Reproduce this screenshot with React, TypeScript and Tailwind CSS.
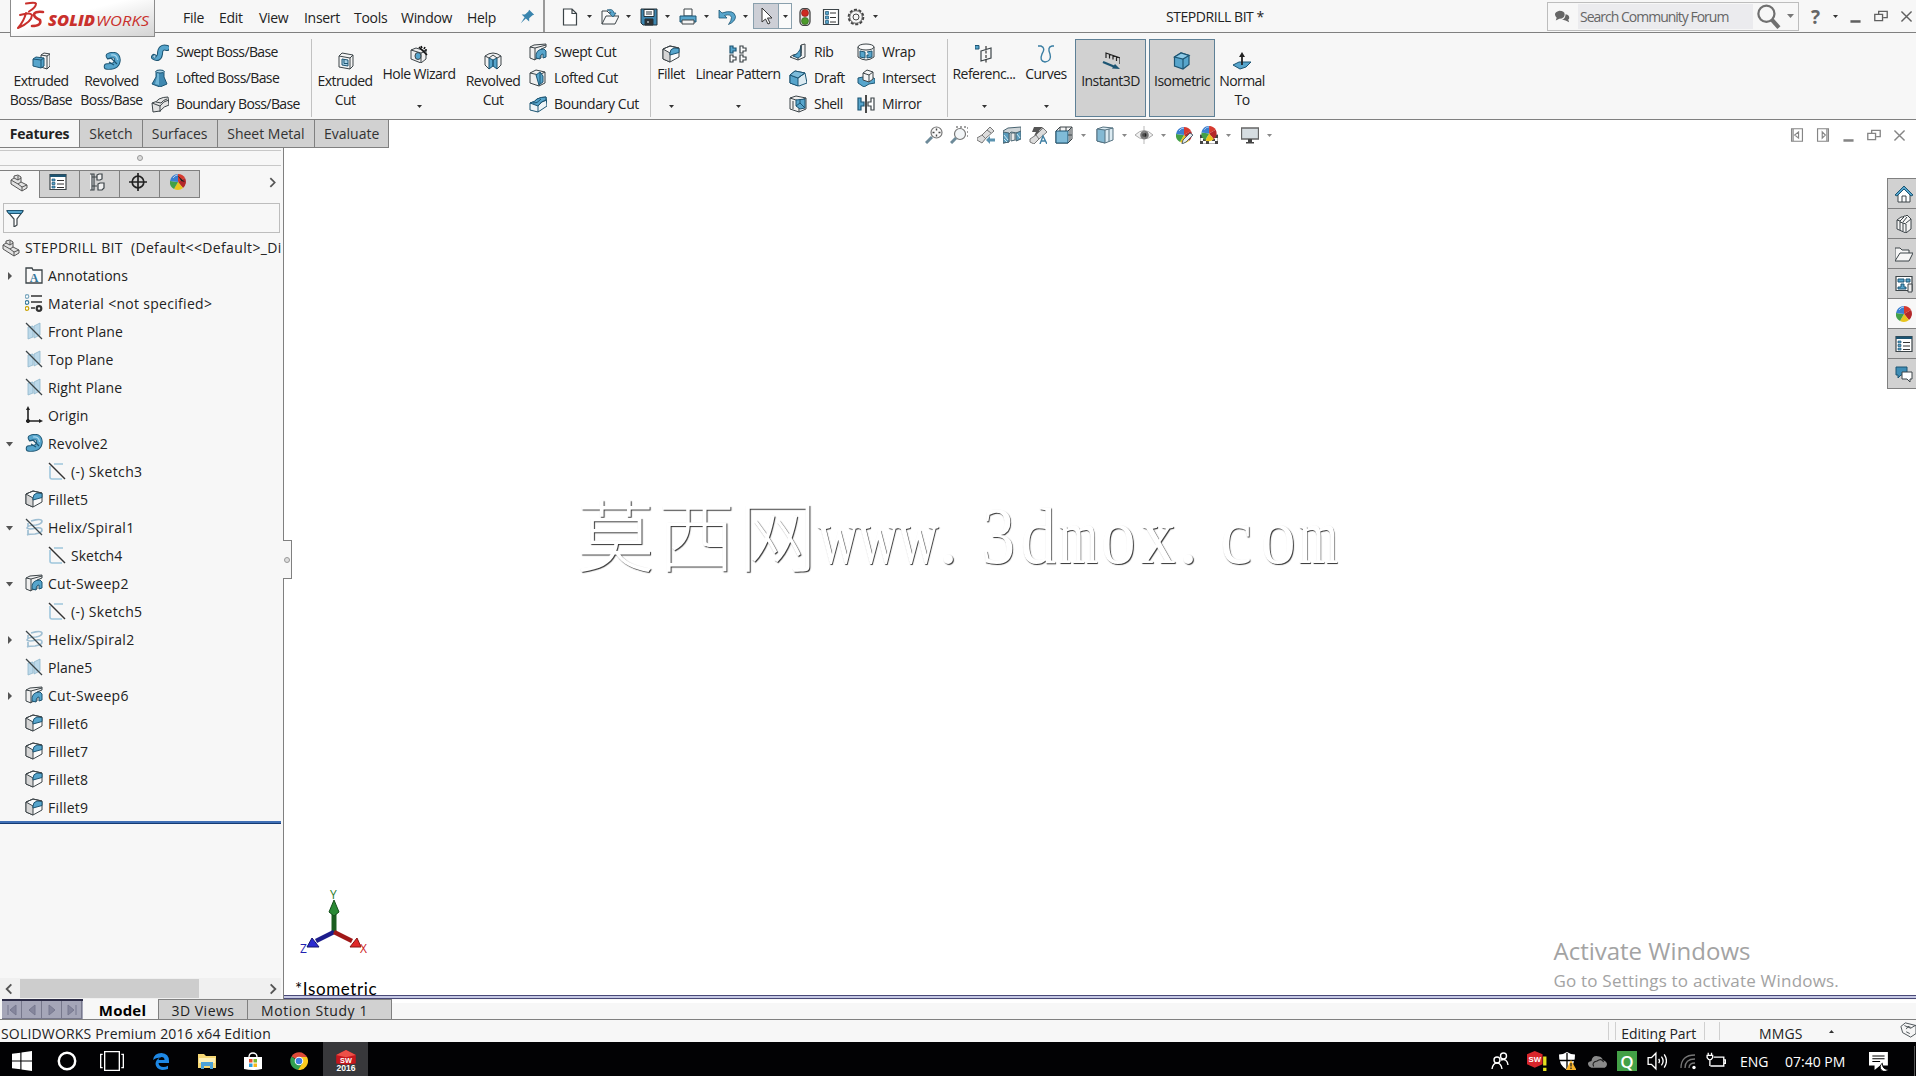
import type { ReactNode } from "react";

type IconProps = { name: string; size?: number; className?: string };

const BLUE = "#57a5cc";
const PALE = "#a9d3e8";
const INK = "#3c4448";
const NAVY = "#1d5573";

const ball = (
  <g>
    <path d="M9 9V1a8 8 0 0 1 7 4z" fill="#d63a2f" />
    <path d="M9 9l7-4a8 8 0 0 1-2 10z" fill="#b3282a" />
    <path d="M9 9l5 6a8 8 0 0 1-9 1z" fill="#e8c41c" />
    <path d="M9 9l-4 7a8 8 0 0 1-4-8z" fill="#43a047" />
    <path d="M9 9L1 8a8 8 0 0 1 8-7z" fill="#3a7fd0" />
    <path d="M4 5q2-3 5-3" stroke="#fff" strokeOpacity=".6" fill="none" />
  </g>
);

const ICONS: Record<string, ReactNode> = {
  extrude: (
    <g stroke={INK}>
      <path d="M9 3l3-2 6 1v12l-3 3-6-2z" fill="#f4f4f4" />
      <path d="M15 4v13M9 3l6 1 3-2" fill="none" />
      <path d="M1 7l3-2 8 1v8l-3 2-8-2z" fill={BLUE} stroke={NAVY} />
      <path d="M1 7l8 1 3-2M9 8v8" fill="none" stroke={NAVY} />
    </g>
  ),
  revolve: (
    <g fill="none">
      <path d="M6 4Q14 1 14.500 8 14 15 4 14.500" stroke={NAVY} strokeWidth="6.500" strokeLinecap="round" />
      <path d="M6 4Q14 1 14.500 8 14 15 4 14.500" stroke={BLUE} strokeWidth="4.700" strokeLinecap="round" />
      <path d="M4 7l4-1 6 6M6 10l5 3" stroke={NAVY} strokeWidth="1.200" />
      <path d="M8 3q6-1 6.500 5" stroke="#a9d8ee" strokeWidth="1.200" />
    </g>
  ),
  sweep: (
    <g fill="none" strokeLinecap="round">
      <path d="M3 14q5 3 6-3 0-8 7-6" stroke={NAVY} strokeWidth="6" />
      <path d="M3 14q5 3 6-3 0-8 7-6" stroke={BLUE} strokeWidth="4" />
      <circle cx="3.500" cy="13.500" r="1.700" fill={PALE} stroke={NAVY} strokeWidth=".7" />
    </g>
  ),
  loft: (
    <g stroke={NAVY}>
      <path d="M5 2v6L1 15l8 3 7-3-3-7V2z" fill="#3f88b0" />
      <path d="M6 8l-2 7 4 1V3H6z" fill="#70b5d6" stroke="none" />
      <ellipse cx="9" cy="2.500" rx="4" ry="1.500" fill={PALE} />
    </g>
  ),
  boundary: (
    <g stroke={INK} fill="#e3e3e3">
      <path d="M1 8q5-1 7-4 4-2 9-2l1 8q-5 1-9 6l-7 1z" />
      <path d="M1 8l8 3q3-5 9-6M9 11v6M5 7l5 1q2-3 6-4" fill="none" />
    </g>
  ),
  extrudeCut: (
    <g stroke={INK}>
      <path d="M3 4l3-3 11 2v11l-3 3-11-2z" fill="#f4f4f4" />
      <path d="M3 4l11 2v11M14 6l3-3" fill="none" />
      <path d="M6 7l6 1v6l-6-1z" fill={PALE} stroke={NAVY} />
      <path d="M8 7.500v4h4" fill="none" stroke={NAVY} />
    </g>
  ),
  holeWizard: (
    <g stroke={INK}>
      <path d="M1 5l5-2 10 3v8l-5 4-10-4z" fill="#eee" />
      <path d="M1 5l10 3 5-2M11 8v10" fill="none" />
      <ellipse cx="8" cy="11" rx="3" ry="3.500" fill={BLUE} />
      <path d="M9 2l8 8M11 1l1 2M15 2l-1 2M17 5l-2 0" stroke="#111" strokeWidth="1.600" />
    </g>
  ),
  revolveCut: (
    <g stroke={INK}>
      <path d="M1 4q8-6 16 0v9l-4 4-4-5-4 5-4-4z" fill="#f2f2f2" />
      <path d="M5 6l4 2v6l-4 3zM13 6l-4 2v6l4 3z" fill={BLUE} stroke={NAVY} />
      <path d="M1 4l4 2 4-3 4 3 4-2" fill="none" />
    </g>
  ),
  sweepCut: (
    <g stroke={INK}>
      <path d="M1 4l4-2 12-1v3l-5 2v9l-6 1v1l-5-2z" fill="#f0f0f0" />
      <path d="M1 4l5 1v12M6 5l11-3" fill="none" />
      <path d="M7 15q-1-9 8-9l2 2v6l-3 1v-4q-3 0-3 5z" fill={BLUE} stroke={NAVY} />
    </g>
  ),
  loftCut: (
    <g stroke={INK}>
      <path d="M1 4l6-3 9 2v11l-6 3-9-3z" fill="#f0f0f0" />
      <path d="M1 4l9 2v11M10 6l6-3" fill="none" />
      <path d="M7 6l4-3 3 4v6l-4 3z" fill={BLUE} stroke={NAVY} />
      <path d="M11 4v11" stroke={NAVY} />
    </g>
  ),
  boundaryCut: (
    <g stroke={NAVY}>
      <path d="M1 8q5-1 7-4 4-2 9-2l1 9-9 6-8-2z" fill="#eef4f7" />
      <path d="M1 8q5-1 7-4 4-2 9-2v3q-5 1-8 6z" fill={BLUE} />
      <path d="M9 11v6M9 11q3-5 9-6M4 8q4 1 8-4" fill="none" />
    </g>
  ),
  fillet: (
    <g stroke={INK}>
      <path d="M1 4l7-3 9 2v9l-9 5-7-3z" fill="#fbfbfb" />
      <path d="M1 4l7 4v9l-7-3z" fill="#d6d6d6" />
      <path d="M8 8q0-4 4-5l5 .5v4L8 10z" fill={BLUE} stroke={NAVY} />
      <path d="M1 4l7-3 9 2" fill="none" />
    </g>
  ),
  linear: (
    <g stroke={INK} strokeWidth="1.200">
      <path d="M1 1h3v2h3v3H4v2H1z" fill={BLUE} stroke={NAVY} />
      <path d="M11 1h3v2h3v3h-3v2h-3zM1 10h3v2h3v3H4v2H1zM11 10h3v2h3v3h-3v2h-3z" fill="#fff" />
    </g>
  ),
  rib: (
    <g stroke={INK}>
      <path d="M12 2l4-1v13l-7 3-8-3 3-2 8-2z" fill="#f0f0f0" />
      <path d="M12 3q-1 7-8 10l5 2 3-2z" fill={BLUE} stroke={NAVY} />
      <path d="M12 2v11M9 17v-2" fill="none" />
    </g>
  ),
  draft: (
    <g stroke={NAVY}>
      <path d="M1 6l5-4 10 2 2 10-8 3-9-3z" fill="#dcebf2" />
      <path d="M1 6l8 3v8l-8-3z" fill={BLUE} />
      <path d="M1 6l5-4 10 2-7 5z" fill="#7dbcdb" />
      <path d="M9 9l7-5" fill="none" />
    </g>
  ),
  shell: (
    <g stroke={INK}>
      <path d="M1 3l6-2 10 2v11l-7 3-9-3z" fill="#f0f0f0" />
      <path d="M1 3l9 3v11M10 6l7-3M4 6v8" fill="none" />
      <path d="M7 5l9-1v9l-5 1-4-3z" fill={BLUE} stroke={NAVY} />
      <path d="M7 11l4-3 5 5M11 4v4" fill="none" stroke={NAVY} />
    </g>
  ),
  wrap: (
    <g stroke={INK}>
      <path d="M1 4v10q8 6 16 0V4z" fill="#eee" />
      <ellipse cx="9" cy="4" rx="8" ry="3" fill="#fafafa" />
      <path d="M3 8l5 1v6l-5-1zM10 9l5-1v6l-5 1v-3h2" fill={BLUE} stroke={NAVY} />
    </g>
  ),
  intersect: (
    <g stroke={INK}>
      <path d="M1 9l5-1 9 0 3 2v4l-6 1-5 3-6-4z" fill={BLUE} stroke={NAVY} />
      <path d="M6 4l4-3 6 2v7l-4 3-6-2z" fill="#f4f4f4" />
      <path d="M6 4l6 2 4-3M12 6v7" fill="none" />
    </g>
  ),
  mirror: (
    <g stroke={INK} strokeWidth="1.200">
      <path d="M1 3h3v4h3v4H4v4H1z" fill={BLUE} stroke={NAVY} />
      <path d="M17 3h-3v4h-3v4h3v4h3z" fill="#fff" />
      <path d="M9 0v18" stroke="#111" strokeWidth="1.500" />
    </g>
  ),
  reference: (
    <g stroke={INK} fill="none">
      <path d="M0 .5h4v3.500H0z" fill={BLUE} stroke={NAVY} />
      <path d="M6 6l10-3v10L6 16z" strokeWidth="1.200" />
      <path d="M11 1v17" stroke="#111" strokeDasharray="3 1.500" />
    </g>
  ),
  curves: (
    <g fill="none" stroke="#3a7ea3" strokeWidth="1.400">
      <path d="M1 1h3q5 2 1 8-3 7 3 8 7-1 5-8-3-7 2-8h2" />
    </g>
  ),
  instant: (
    <g stroke="#222" fill="none">
      <path d="M4 6V1l14 5v6M7.500 2.500v4M11 3.500v4M14.500 5v4" strokeWidth="1.200" />
      <path d="M1 10l12 5" stroke={NAVY} strokeWidth="2.400" />
      <path d="M18 17l-8-.5 3-4.500z" fill={NAVY} stroke="none" />
    </g>
  ),
  isometric: (
    <g stroke={NAVY} strokeWidth="1.200">
      <path d="M1.500 5L8 1l8 2.500v9L10 17l-8.500-3z" fill={BLUE} />
      <path d="M1.500 5L8 1l8 2.500L10 7z" fill="#8cc9e6" />
      <path d="M10 7v10" />
    </g>
  ),
  normal: (
    <g>
      <path d="M0 13l6-3h12l-5 5-6 2z" fill={BLUE} stroke={NAVY} />
      <path d="M9 13V3" stroke="#222" strokeWidth="1.800" />
      <path d="M9 0l3 5H6z" fill="#222" />
    </g>
  ),
  pin: <path d="M11 1l6 6-2 .5-4 3.500 0 4-4-3.500L1 17l4.500-7L2 6.500h4l4-3.500z" fill="#3a85ae" />,
  newDoc: <path d="M2.500 1H11l4.500 4.500V17h-13zM11 1v4.500h4.500" fill="#fff" stroke={INK} strokeWidth="1.200" />,
  open: (
    <g stroke={INK}>
      <path d="M1 16V3h5l2 2h5v3M1 16L5 8h13l-4 8z" fill="#f8f8f8" />
      <path d="M6 2q6-2 7 3h2l-3 4-4-4h2q0-2-4-3z" fill={BLUE} stroke={NAVY} strokeWidth=".7" />
    </g>
  ),
  save: (
    <g stroke="#24323a">
      <path d="M1 1h16v16H3l-2-2z" fill="#3d86b0" />
      <path d="M4 1.500h10v7H4z" fill="#fff" />
      <path d="M6 4h6M6 6h6" />
      <path d="M5 11h8v6H5z" fill="#333" />
      <path d="M7 12.500h2v3H7z" fill="#fff" />
    </g>
  ),
  print: (
    <g stroke={INK}>
      <path d="M5 1h8v7H5z" fill="#fff" />
      <path d="M1 8h16v6H1z" fill={BLUE} stroke={NAVY} />
      <path d="M3 12h12v4H3z" fill="#f4f4f4" />
    </g>
  ),
  undo: <path d="M1 2v8h8L6.500 7.500q6-2 7 2 0 3-3 7 7-3 7-8Q16 1 4 5z" fill={BLUE} stroke={NAVY} strokeWidth=".8" />,
  cursor: <path d="M5 1v14l3.500-3 2.500 5 2-1-2.500-5H15z" fill="#fff" stroke="#333" />,
  traffic: (
    <g>
      <rect x="4" y="0.500" width="10" height="17" rx="4" fill="#e4e4e4" stroke="#444" strokeWidth="1.300" />
      <circle cx="9" cy="5" r="3.500" fill="#cf2a20" stroke="#7a1a14" strokeWidth=".6" />
      <circle cx="9" cy="13" r="3.500" fill="#4c9a2a" stroke="#2c5a18" strokeWidth=".6" />
    </g>
  ),
  list: (
    <g>
      <path d="M1.500 1.500h15v15h-15z" fill="#fff" stroke={INK} strokeWidth="1.200" />
      <path d="M3.500 3.500h3v3h-3zM3.500 8h3v3h-3zM3.500 12.500h3v3h-3z" fill={BLUE} stroke={NAVY} strokeWidth=".7" />
      <path d="M8 5h6M8 9.500h6M8 14h6" stroke="#333" />
    </g>
  ),
  gear: (
    <g fill="none" stroke="#444">
      <circle cx="9" cy="9" r="7.300" strokeWidth="2" strokeDasharray="3 1.590" />
      <circle cx="9" cy="9" r="6.300" fill="#f7f7f7" stroke="#555" />
      <circle cx="9" cy="9" r="3" />
    </g>
  ),
  chat: (
    <g fill="#666">
      <path d="M6 3q6 0 6 4 0 5-6 5l-4 2 1-3Q-2 5 6 3z" />
      <path d="M13 7q5 1 4 5l-1 1 1 3-4-2-4-1q4-1 4-6z" />
    </g>
  ),
  search: (
    <g fill="none" stroke="#707070">
      <circle cx="7.500" cy="7" r="5.800" strokeWidth="1.600" />
      <path d="M11.500 11.500l5 5.500" strokeWidth="3" />
    </g>
  ),
  part: (
    <g stroke="#555" fill="#e2e2e2">
      <path d="M1 6l3-2V2l4-1 3 2v5l6 3v3l-5 3-11-7z" />
      <path d="M1 6l7 4 3-2M4 4l4 2V2M8 6l3-2M12 17v-4l5-2M8 10l4 3" fill="none" />
    </g>
  ),
  props: (
    <g>
      <path d="M1 1.500h16v15H1z" fill="#fff" stroke={INK} strokeWidth="1.200" />
      <path d="M1 1.500h16v2.500H1z" fill={NAVY} />
      <path d="M3 6h3v2H3zM3 9.500h3v2H3zM3 13h3v2H3z" fill={BLUE} stroke={NAVY} strokeWidth=".7" />
      <path d="M8 7.500h7M8 11h7M8 14.500h7" stroke="#333" />
    </g>
  ),
  config: (
    <g stroke={INK} fill="#f0f0f0" strokeWidth="1.200">
      <path d="M3 1v16M1 1h4v16H1M3 4h5M3 13h5" />
      <path d="M8 2l2-1h3v5l-2 1H8zM9 11l2-1h4v5l-2 2H9z" />
    </g>
  ),
  target: (
    <g fill="none" stroke="#222" strokeWidth="1.700">
      <circle cx="9" cy="9" r="5.800" />
      <path d="M9 0v18M0 9h18" />
    </g>
  ),
  display: (
    <g>
      {ball}
      <path d="M8 2l8 7-4-1-1-2z" fill="#222" />
    </g>
  ),
  ball,
  filter: (
    <g stroke={INK}>
      <path d="M1 2h16l-6 8v6l-3 2v-8z" fill="#fff" strokeWidth="1.200" />
      <path d="M1 1.500h16l-1.500 3h-13z" fill={BLUE} stroke={NAVY} />
    </g>
  ),
  annotations: (
    <g>
      <path d="M1 2h6l1 2h9v13H1z" fill="#fafafa" stroke={INK} strokeWidth="1.300" />
      <text x="9" y="15.500" fontSize="12" fontWeight="700" textAnchor="middle" fill="#34769c" fontFamily="Liberation Serif, serif">A</text>
    </g>
  ),
  material: (
    <g>
      <g fill="#fff" strokeWidth="1.200">
        <circle cx="2" cy="2.500" r="1.800" stroke="#7aa7be" />
        <circle cx="2" cy="8.500" r="1.800" stroke="#35789c" />
        <circle cx="2" cy="14.500" r="1.800" stroke="#c9a200" />
      </g>
      <path d="M6 2h11M6 8h11M6 14h4" stroke="#333" strokeWidth="1.700" />
      <circle cx="14" cy="14.500" r="2.300" fill="none" stroke="#333" strokeWidth="2.200" />
    </g>
  ),
  plane: (
    <g>
      <path d="M3 5l5-1v11l-5 2zM9 4l6-3v12l-6 3z" fill="#bcd9ea" stroke="#8fb6cc" strokeWidth=".8" />
      <path d="M1 1l16 16" stroke={INK} strokeWidth="1.300" />
    </g>
  ),
  origin: (
    <g stroke="#222" fill="#222">
      <path d="M3 2v13h12" fill="none" strokeWidth="1.600" />
      <path d="M3 0l2 4H1zM18 15l-4 2v-4z" stroke="none" />
      <circle cx="3" cy="15" r="1.600" />
    </g>
  ),
  sketch: (
    <g fill="none">
      <path d="M6 2h9M2 4v11q0 2 2 2h10" stroke="#9fc6dc" strokeWidth="1.600" />
      <path d="M1 1l16 16" stroke="#333" strokeWidth="1.400" />
    </g>
  ),
  helix: (
    <g fill="none">
      <path d="M6 3q10-3 11 0 0 3-6 4-8 0-9 3 2 2 9 0 6-1 6 2 0 3-7 4-6 0-8 1M3 5v4M3 12v5" stroke="#9fbfd3" strokeWidth="1.700" />
      <path d="M1 1l16 16" stroke={INK} strokeWidth="1.300" />
    </g>
  ),
  zoomFit: (
    <g stroke="#777" fill="none">
      <circle cx="11.500" cy="6.500" r="5.500" fill="#fafafa" strokeWidth="1.200" />
      <path d="M11.500 2.500v2M11.500 8.500v2M7.500 6.500h2M13.500 6.500h2" stroke="#444" strokeWidth="1.400" />
      <path d="M7 11l-6 6" stroke="#6d8a99" strokeWidth="3" />
    </g>
  ),
  zoomArea: (
    <g stroke="#777" fill="none">
      <path d="M6 1h12v12" stroke="#444" strokeDasharray="2 2" />
      <circle cx="10" cy="8" r="5.500" fill="#f3f6f8" strokeWidth="1.200" />
      <path d="M6 12l-5 5" stroke="#6d8a99" strokeWidth="3" />
    </g>
  ),
  previous: (
    <g stroke="#777" fill="#dcdcdc">
      <path d="M0 12l5-3 8-8 4 4-8 7-4 5-5-3z" />
      <path d="M5 9l4 4M10 4l4 3" />
      <path d="M9 14l4-4v2.500h5v3h-5V18z" fill="#5b93b0" stroke="none" />
    </g>
  ),
  section: (
    <g stroke="#4a6471">
      <path d="M0 5l5-3 13-1v11l-4 2V7l-6-1-2 2v8l-6 1z" fill="#cfd5d8" />
      <path d="M0 6l6 1v9l-6 1zM13 7l5-2v8l-5 2z" fill="#5a9cbd" />
      <path d="M8 7h4v7l-4 1z" fill="#e8e8e8" />
      <path d="M1 9l4 5M1 13l3 3M14 8l3 4" stroke="#cfe8f2" />
    </g>
  ),
  dynamic: (
    <g stroke="#777">
      <path d="M5 1h9l-4 4h4l-9 5 2-4H3z" fill="#555" stroke="none" />
      <path d="M1 13l6-4 7-7 4 4-8 7-5 5-4-2z" fill="#dcdcdc" />
      <path d="M7 9l3 4" />
      <path d="M11 18l3-8 4 8M12 15h4" fill="none" stroke="#3f7fa3" strokeWidth="1.400" />
    </g>
  ),
  orientation: (
    <g stroke={INK} fill="none">
      <path d="M5 1h12v12l-4 4H1V5z" fill="#f3f3f3" />
      <path d="M1 5h12v12H1z" fill="#80bbd8" stroke={NAVY} />
      <path d="M13 5l4-4M11 1v4M13 9h4M15 3v12M5 1v4" />
    </g>
  ),
  style: (
    <g stroke="#547180">
      <path d="M1 3l6-2 10 1v12l-8 3-8-2z" fill="#dcebf2" />
      <path d="M1 3l8 1v13l-8-2z" fill="#84b9d3" />
      <path d="M9 4l8-2M13 3v12" fill="none" />
    </g>
  ),
  eye: (
    <g>
      <path d="M0 9q9-9 18 0-9 8-18 0z" fill="#f0f0f0" stroke="#aaa" />
      <circle cx="9.500" cy="9" r="4.300" fill="#777" />
      <circle cx="9.500" cy="9" r="2" fill="#222" />
      <path d="M9 0v18" stroke="#999" strokeWidth=".7" />
    </g>
  ),
  appearance: (
    <g>
      {ball}
      <path d="M8 14l7-7 3 2-7 7-4 2z" fill="#e6edf0" stroke="#456" strokeWidth=".9" />
    </g>
  ),
  scene: (
    <g>
      <path d="M0 9h18v9H0z" fill="#fff" stroke="#444" strokeWidth=".8" />
      <path d="M0 9h3v3H0zM15 9h3v3h-3zM3 13h3v2H3zM12 13h3v2h-3zM0 15h3v3H0zM6 15h3v3H6zM15 15h3v3h-3z" fill="#444" />
      <g transform="translate(.5 -1) scale(.95)">{ball}</g>
    </g>
  ),
  monitor: (
    <g>
      <path d="M.5 2h17v11H.5z" fill="#d6dde1" stroke="#666" strokeWidth="1.300" />
      <path d="M7 13h4v3H7zM5 16h8v1.500H5z" fill="#444" />
    </g>
  ),
  home: (
    <g stroke={INK}>
      <path d="M3 9v8h12V9L9 3z" fill="#fff" />
      <path d="M0 10l9-9 9 9-2 1-7-7-7 7z" fill={BLUE} stroke={NAVY} />
      <path d="M7 17v-6h4v6" fill="none" />
    </g>
  ),
  library: (
    <g stroke={INK} fill="#f5f5f5">
      <path d="M2 5l4-3h2l1-1h2l1-1 4 4v10l-5 4-9-4z" />
      <path d="M2 5l3 1v9M5 6l4-4M5 7l3 1v8M8 7l4-5M8 8l3 1v9M11 8l5-4" fill="none" />
    </g>
  ),
  folder: (
    <g stroke={INK} fill="#f6f6f6">
      <path d="M0 16V3h5l2 2h7v3" />
      <path d="M0 16L5 8h13l-4 8z" />
    </g>
  ),
  palette: (
    <g stroke={INK}>
      <path d="M1 1.500h16v14H1z" fill="#fff" strokeWidth="1.200" />
      <path d="M3 4h6v3H3zM11 4h4v3h-4zM6 9h3v3h2v2H3v-2h3z" fill={BLUE} stroke={NAVY} />
      <path d="M13 9h4v8h-4z" fill="#eee" />
    </g>
  ),
  forum: (
    <g>
      <path d="M1 2h11v8H6l-3 3v-3H1z" fill="#3f8db5" stroke={NAVY} />
      <path d="M7 7h10v7h-2v3l-3-3H7z" fill="#fff" stroke={INK} />
    </g>
  ),
  restore: <path d="M1 7h10v8H1zM6 6V3h11v8h-5" fill="none" stroke="currentColor" strokeWidth="1.700" />,
  close: <path d="M2 2l14 14M16 2L2 16" stroke="currentColor" strokeWidth="2" />,
  minimize: <path d="M2 14.500h14" stroke="currentColor" strokeWidth="3.500" />,
  paneLeft: <path d="M2 1h14v16H2zM4 1v16M11 5v8L6 9z" fill="none" stroke="currentColor" strokeWidth="1.500" />,
  paneRight: <path d="M2 1h14v16H2zM14 1v16M8 5v8l4-4z" fill="none" stroke="currentColor" strokeWidth="1.500" />,
  chevLeft: <path d="M12 3L6 9l6 6" fill="none" stroke="#555" strokeWidth="2.400" />,
  chevRight: <path d="M6 3l6 6-6 6" fill="none" stroke="#555" strokeWidth="2.400" />,
  tag: (
    <g stroke={INK} fill="#f5f5f5">
      <path d="M1 5l5-4 12 3v9l-6 4L3 12z" />
      <path d="M5 4l7 3 5-3M7 8l2-3 3 1M7 11l4 2" fill="none" />
    </g>
  ),
  // taskbar
  windows: <path d="M0 2.500l7.500-1v7H0zM8.500 1.300L18 0v8.500H8.500zM0 9.500h7.500v7l-7.500-1zM8.500 9.500H18V18l-9.500-1.300z" fill="#fff" />,
  cortana: <circle cx="9" cy="9" r="7.400" fill="none" stroke="#fff" strokeWidth="2.200" />,
  taskview: <path d="M3.500 2h11v14h-11zM2 4H.5v10H2M16 4h1.500v10H16" fill="none" stroke="#fff" strokeWidth="1" />,
  edge: <path d="M1 8Q2 1 9.500 1 17 1.500 17 9v2H6.500q.5 4 5 4 2.500 0 4.500-1.300V17q-3 1-6 1-6-1-6.500-6Q3.600 7.500 8 5.500 3.500 5.500 1 8zM6.500 8h6q0-3-3-3-2.600.3-3 3z" fill="#1e88e5" />,
  explorer: (
    <g>
      <path d="M0 2h6l2 2h10v12H0z" fill="#f6d774" />
      <path d="M1 6h16v5H1z" fill="#fdf0b8" />
      <path d="M3 10h12v7h-3v-3H6v3H3z" fill="#4da3d8" />
    </g>
  ),
  store: (
    <g>
      <path d="M0 5h18v12q-9 2-18 0z" fill="#fff" />
      <path d="M5 5q0-4 4-4t4 4" fill="none" stroke="#fff" strokeWidth="1.300" />
      <path d="M5 7h3.500v3.500H5z" fill="#e8502f" />
      <path d="M9.500 7H13v3.500H9.500z" fill="#7cb82f" />
      <path d="M5 11.500h3.500V15H5z" fill="#2b9fe0" />
      <path d="M9.500 11.500H13V15H9.500z" fill="#f6b81a" />
    </g>
  ),
  chrome: (
    <g>
      <path d="M9 9L1.500 4.500A9 9 0 0 1 17 5z" fill="#dd4b39" />
      <path d="M9 9h-1L1.500 4.500A9 9 0 0 0 8 18l5-7z" fill="#33a152" />
      <path d="M9 5h8a9 9 0 0 1-9 13l4.500-7z" fill="#fbcb1e" />
      <circle cx="9" cy="9" r="4.300" fill="#fff" />
      <circle cx="9" cy="9" r="3.300" fill="#3f7fe0" />
    </g>
  ),
  sw: (
    <g>
      <path d="M1 4l8-4 8 4v7l-8 1-8-1z" fill="#c4161c" />
      <path d="M1 4l8-4 8 4-8 2z" fill="#ec5048" />
      <text x="9" y="10.500" fontSize="6" fontWeight="700" textAnchor="middle" fill="#fff" fontFamily="Liberation Sans, sans-serif">SW</text>
      <text x="9" y="16.800" fontSize="7" fontWeight="700" textAnchor="middle" fill="#fff" fontFamily="Liberation Sans, sans-serif">2016</text>
    </g>
  ),
  people: (
    <g fill="none" stroke="#fff" strokeWidth="1.400">
      <circle cx="6" cy="8" r="3" />
      <path d="M1 17q1-6 5-6t5 6" />
      <circle cx="12.500" cy="4" r="3" />
      <path d="M10 8q6-2 7 5" />
    </g>
  ),
  swAlert: (
    <g>
      <path d="M0 3l7-3 7 3v9l-7 3-7-3z" fill="#d9262b" />
      <text x="7" y="10" fontSize="7" fontWeight="700" textAnchor="middle" fill="#fff" fontFamily="Liberation Sans, sans-serif">SW</text>
      <path d="M14.500 5h3v8h-3zM14.500 15h3v3h-3z" fill="#e6e21e" />
    </g>
  ),
  shield: (
    <g>
      <path d="M9 0q4 2.500 8 2.500Q17.500 13 9 18 .5 13 1 2.500 5 2.500 9 0z" fill="#fff" />
      <path d="M9 1v16M1 8.500h16" stroke="#000" strokeWidth="1.300" />
      <path d="M13 8l5.500 10H8z" fill="#f7b32b" />
      <path d="M13 11v3.500M13 15.500v1.500" stroke="#222" strokeWidth="1.300" />
    </g>
  ),
  cloud: (
    <g>
      <path d="M2 14q-3-4 2-5 1-6 7-4 3 1 3 3 4 1 4 4 0 2-2 3H4z" fill="#8a8a8a" />
      <path d="M6 14q-2-4 3-5 4-3 6 1" fill="none" stroke="#222" />
    </g>
  ),
  speaker: (
    <g fill="none" stroke="#fff" strokeWidth="1.200">
      <path d="M1 6h3l4-4v14l-4-4H1zM10.500 7q1.500 2 0 4M13 5q3 4 0 8M15.500 3q4 6 0 12" />
    </g>
  ),
  wifi: (
    <g fill="none" stroke="#777" strokeWidth="1.300">
      <path d="M2 16Q2 3 16 3M6 16q0-9 10-9M10 16q0-5 6-5" />
      <circle cx="15" cy="15.500" r="1.700" fill="#fff" stroke="none" />
    </g>
  ),
  battery: (
    <g fill="none" stroke="#fff" strokeWidth="1.200">
      <path d="M7 5.500h9v8H4M16 8h1.500v3H16" />
      <path d="M1 4h5v2q-2.500 4-5 0zM2 4V1.500M5 4V1.500M3.500 8v5.500" />
    </g>
  ),
  notify: (
    <g>
      <path d="M0 1h17v12H10l-5 4v-4H0z" fill="#fff" />
      <path d="M3 4.500h11M3 7h11M3 9.500h7" stroke="#000" />
      <path d="M12 11a4 4 0 1 0 5.500 5.500Q12 17 12 11z" fill="#fff" stroke="#000" strokeWidth=".8" />
    </g>
  ),
};

function Icon({ name, size = 18, className = "" }: IconProps) {
  return (
    <svg width={size} height={size} viewBox="0 0 18 18" className={`shrink-0 ${className}`}>
      {ICONS[name]}
    </svg>
  );
}

function Caret({ className = "text-[#333]" }: { className?: string }) {
  return (
    <svg width="5" height="3" viewBox="0 0 5 3" className={`shrink-0 ${className}`}>
      <path d="M0 0h5L2.500 3z" fill="currentColor" />
    </svg>
  );
}

const MENU = [
  { label: "File", cls: "w-[36px]" },
  { label: "Edit", cls: "w-[40px]" },
  { label: "View", cls: "w-[45px]" },
  { label: "Insert", cls: "w-[50px]" },
  { label: "Tools", cls: "w-[47px]" },
  { label: "Window", cls: "w-[66px]" },
  { label: "Help", cls: "w-[54px]" },
];

function Logo() {
  return (
    <div className="relative z-10 ml-[10px] h-[37px] w-[145px] shrink-0 self-start border border-t-0 border-[#8c8c8c] bg-linear-to-br from-white from-40% to-[#d4d4d4]">
      <svg width="143" height="36" viewBox="0 0 143 36">
        <g fill="none" stroke="#c9302c" strokeWidth="2" strokeLinecap="round" strokeLinejoin="round">
          <path d="M15 3.500q9-1.500 10 0 0 4-7 8" />
          <path d="M9 15q10-3 12 0 0 7-14 13 6-7 8-15" />
          <path d="M32 12q-9-1-9 3 1 3 6 5 2 6-8 6" strokeWidth="2.600" />
        </g>
        <text x="37" y="26" fontSize="15" fontWeight="800" fontStyle="italic" fill="#c9302c" textLength="47" lengthAdjust="spacingAndGlyphs" fontFamily="Open Sans, sans-serif">SOLID</text>
        <text x="85" y="26" fontSize="15" fontStyle="italic" fill="#c9302c" textLength="53" lengthAdjust="spacingAndGlyphs" fontFamily="Open Sans, sans-serif">WORKS</text>
      </svg>
    </div>
  );
}

function QuickItem({ icon, cls }: { icon: string; cls: string }) {
  return (
    <div className={`flex items-center justify-between ${cls}`}>
      <Icon name={icon} />
      <Caret />
    </div>
  );
}

function TitleBar() {
  return (
    <div className="flex h-[33px] shrink-0 items-center border-b border-[#808080] bg-[#f7f7f7]">
      <Logo />
      <div className="ml-[28px] flex pt-[3px] tracking-[-0.3px]">
        {MENU.map((m) => (
          <span key={m.label} className={m.cls}>{m.label}</span>
        ))}
      </div>
      <Icon name="pin" size={15} className="mt-px -ml-px" />
      <div className="ml-[8px] h-full w-[2px] bg-[#9a9a9a]" />
      <div className="ml-[16px] flex items-center gap-[9px] pt-px">
        <QuickItem icon="newDoc" cls="w-[31px]" />
        <QuickItem icon="open" cls="w-[30px]" />
        <QuickItem icon="save" cls="w-[30px]" />
        <QuickItem icon="print" cls="w-[30px]" />
        <QuickItem icon="undo" cls="w-[30px]" />
      </div>
      <div className="ml-[5px] flex h-[26px] w-[39px] border border-[#8aa0ad] bg-[#fafafa]">
        <div className="flex w-[25px] items-center justify-center border-r border-[#8aa0ad] bg-[#cdcfd6]">
          <Icon name="cursor" />
        </div>
        <div className="flex flex-1 items-center justify-center"><Caret /></div>
      </div>
      <Icon name="traffic" className="mt-px ml-[4px]" />
      <Icon name="list" className="mt-px ml-[8px]" />
      <Icon name="gear" className="mt-px ml-[7px]" />
      <Caret className="ml-[8px] text-[#333]" />
      <span className="ml-[288px] w-[381px] pt-[2px] tracking-[-0.45px]">STEPDRILL BIT *</span>
      <div className="flex h-[29px] w-[252px] items-center border border-[#bdbdbd] bg-[#f7f7f7] pl-[6px]">
        <Icon name="chat" size={16} />
        <div className="ml-[8px] flex h-[25px] w-[175px] items-center bg-[#ebebee] pt-[2px] pl-[2px] tracking-[-1px] whitespace-nowrap text-[#666]">Search Community Forum</div>
        <Icon name="search" size={25} className="ml-[3px]" />
        <svg width="7" height="4" viewBox="0 0 7 4" className="ml-[6px]"><path d="M0 0h7L3.500 4z" fill="#777" /></svg>
      </div>
      <span className="ml-[12px] w-[22px] pt-px text-[19px] font-bold text-[#666]">?</span>
      <Caret />
      <div className="ml-[11px] flex items-center gap-[12px] text-[#606060]">
        <Icon name="minimize" size={13} className="mt-[3px]" />
        <Icon name="restore" size={14} />
        <Icon name="close" size={13} />
      </div>
    </div>
  );
}

type BigProps = { icon: string; lines: string[]; cls: string; drop?: boolean; active?: boolean };

function BigButton({ icon, lines, cls, drop, active }: BigProps) {
  return (
    <div
      className={`flex h-[78px] shrink-0 flex-col items-center whitespace-nowrap ${cls} ${
        active ? "border border-[#5e8096] bg-[#d1d1d1] pt-[12px]" : drop ? "pt-[6px]" : "pt-[13px]"
      }`}
    >
      <Icon name={icon} />
      {lines.map((l) => (
        <span key={l} className="mt-[2px] leading-[17px] tracking-[-0.55px]">{l}</span>
      ))}
      {drop && <Caret className="mt-[23px] text-[#333]" />}
    </div>
  );
}

type StackProps = { items: [string, string][]; cls: string };

function SmallStack({ items, cls }: StackProps) {
  return (
    <div className={`flex h-[78px] shrink-0 flex-col ${cls}`}>
      {items.map(([icon, label]) => (
        <div key={label} className="flex h-[26px] items-center gap-[7px] whitespace-nowrap">
          <Icon name={icon} />
          <span>{label}</span>
        </div>
      ))}
    </div>
  );
}

function Divider() {
  return <div className="h-[78px] w-px shrink-0 bg-[#c2c2c2]" />;
}

function Ribbon() {
  return (
    <div className="flex h-[87px] shrink-0 border-b border-[#808080] bg-[#f7f7f7] pt-[6px]">
      <BigButton icon="extrude" lines={["Extruded", "Boss/Base"]} cls="ml-[6px] w-[70px]" />
      <BigButton icon="revolve" lines={["Revolved", "Boss/Base"]} cls="w-[71px]" />
      <SmallStack items={[["sweep", "Swept Boss/Base"], ["loft", "Lofted Boss/Base"], ["boundary", "Boundary Boss/Base"]]} cls="ml-[4px] w-[160px] tracking-[-0.6px]" />
      <Divider />
      <BigButton icon="extrudeCut" lines={["Extruded", "Cut"]} cls="w-[66px]" />
      <BigButton icon="holeWizard" lines={["Hole Wizard"]} cls="w-[82px]" drop />
      <BigButton icon="revolveCut" lines={["Revolved", "Cut"]} cls="w-[66px]" />
      <SmallStack items={[["sweepCut", "Swept Cut"], ["loftCut", "Lofted Cut"], ["boundaryCut", "Boundary Cut"]]} cls="ml-[3px] w-[121px] tracking-[-0.4px]" />
      <Divider />
      <BigButton icon="fillet" lines={["Fillet"]} cls="w-[40px]" drop />
      <BigButton icon="linear" lines={["Linear Pattern"]} cls="w-[94px]" drop />
      <SmallStack items={[["rib", "Rib"], ["draft", "Draft"], ["shell", "Shell"]]} cls="ml-[4px] w-[68px] tracking-[-0.5px]" />
      <SmallStack items={[["wrap", "Wrap"], ["intersect", "Intersect"], ["mirror", "Mirror"]]} cls="w-[90px] tracking-[-0.4px]" />
      <Divider />
      <BigButton icon="reference" lines={["Referenc..."]} cls="w-[72px]" drop />
      <BigButton icon="curves" lines={["Curves"]} cls="w-[52px]" drop />
      <BigButton icon="instant" lines={["Instant3D"]} cls="ml-[3px] w-[71px]" active />
      <BigButton icon="isometric" lines={["Isometric"]} cls="ml-[3px] w-[66px]" active />
      <BigButton icon="normal" lines={["Normal", "To"]} cls="w-[54px]" />
    </div>
  );
}

const TREE: { icon: string; label: string; cls?: string; child?: boolean; open?: boolean; closed?: boolean }[] = [
  { icon: "annotations", label: "Annotations", closed: true, cls: "tracking-[0.05px]" },
  { icon: "material", label: "Material <not specified>", cls: "tracking-[0.3px]" },
  { icon: "plane", label: "Front Plane" },
  { icon: "plane", label: "Top Plane", cls: "tracking-[0.1px]" },
  { icon: "plane", label: "Right Plane", cls: "tracking-[0.1px]" },
  { icon: "origin", label: "Origin", cls: "tracking-[0.1px]" },
  { icon: "revolve", label: "Revolve2", open: true, cls: "tracking-[0.2px]" },
  { icon: "sketch", label: "(-) Sketch3", child: true, cls: "tracking-[0.35px]" },
  { icon: "fillet", label: "Fillet5", cls: "tracking-[0.2px]" },
  { icon: "helix", label: "Helix/Spiral1", open: true, cls: "tracking-[0.3px]" },
  { icon: "sketch", label: "Sketch4", child: true },
  { icon: "sweepCut", label: "Cut-Sweep2", open: true, cls: "tracking-[0.3px]" },
  { icon: "sketch", label: "(-) Sketch5", child: true, cls: "tracking-[0.35px]" },
  { icon: "helix", label: "Helix/Spiral2", closed: true, cls: "tracking-[0.3px]" },
  { icon: "plane", label: "Plane5" },
  { icon: "sweepCut", label: "Cut-Sweep6", closed: true, cls: "tracking-[0.3px]" },
  { icon: "fillet", label: "Fillet6", cls: "tracking-[0.2px]" },
  { icon: "fillet", label: "Fillet7", cls: "tracking-[0.2px]" },
  { icon: "fillet", label: "Fillet8", cls: "tracking-[0.2px]" },
  { icon: "fillet", label: "Fillet9", cls: "tracking-[0.2px]" },
];

function FeatureTree() {
  return (
    <div className="flex w-[284px] shrink-0 flex-col border-r border-[#808080] bg-[#f7f7f7]">
      <div className="mt-[2px] flex h-[16px] w-[281px] items-center justify-center border-y border-[#c8c8c8] pr-px">
        <div className="h-[6px] w-[6px] rounded-full border border-[#999] bg-[#ddd]" />
      </div>
      <div className="mt-[4px] flex h-[28px] w-[281px] items-center">
        <div className="flex h-full w-[40px] items-center justify-center border-t border-r border-[#808080] pr-[2px] pb-[4px]"><Icon name="part" /></div>
        {["props", "config", "target", "display"].map((n) => (
          <div key={n} className="flex h-full w-[40px] items-center justify-center border border-l-0 border-[#808080] bg-[#d1d1d1] pr-[3px] pb-[4px]">
            <Icon name={n} />
          </div>
        ))}
        <Icon name="chevRight" size={13} className="mb-[4px] ml-[66px]" />
      </div>
      <div className="mt-[5px] ml-[3px] flex h-[30px] w-[277px] items-center border border-[#bdbdbd] pl-[2px]">
        <Icon name="filter" />
      </div>
      <div className="mt-px flex h-[28px] w-[281px] items-center gap-[5px] overflow-hidden pl-[2px] whitespace-pre">
        <Icon name="part" />
        <span className="tracking-[0.36px]">{"STEPDRILL BIT  (Default<<Default>_Di"}</span>
      </div>
      {TREE.map((t) => (
        <div key={t.label} className="flex h-[28px] items-center whitespace-nowrap">
          <div className="flex w-[25px] pl-[6px]">
            {t.open && <svg width="7" height="5" viewBox="0 0 7 5"><path d="M0 0h7L3.500 4.500z" fill="#555" /></svg>}
            {t.closed && <svg width="5" height="8" viewBox="0 0 5 8" className="ml-[2px]"><path d="M0 0v8l4-4z" fill="#555" /></svg>}
          </div>
          <Icon name={t.icon} className={t.child ? "mb-[2px] ml-[23px]" : "mb-[2px]"} />
          <span className={`ml-[5px] ${t.cls ?? ""}`}>{t.label}</span>
        </div>
      ))}
      <div className="-mt-px h-[3px] w-[281px] border-b border-[#143a73] bg-[#3f6fb5]" />
      <div className="mt-auto flex h-[21px] w-[281px] items-center bg-[#f0f0f0]">
        <Icon name="chevLeft" size={14} className="mr-[4px] ml-[2px]" />
        <div className="h-[19px] w-[179px] bg-[#cdcdcd]" />
        <Icon name="chevRight" size={14} className="ml-[67px]" />
      </div>
    </div>
  );
}

const HEADS_UP: { icon: string; cls: string; drop?: boolean }[] = [
  { icon: "zoomFit", cls: "w-[25px]" },
  { icon: "zoomArea", cls: "w-[27px]" },
  { icon: "previous", cls: "w-[26px]" },
  { icon: "section", cls: "w-[26px]" },
  { icon: "dynamic", cls: "w-[26px]" },
  { icon: "orientation", cls: "w-[41px]", drop: true },
  { icon: "style", cls: "w-[39px]", drop: true },
  { icon: "eye", cls: "w-[40px]", drop: true },
  { icon: "appearance", cls: "w-[25px]" },
  { icon: "scene", cls: "w-[41px]", drop: true },
  { icon: "monitor", cls: "w-[40px]", drop: true },
];

const COMMAND_TABS = [
  { label: "Sketch", cls: "w-[63px]" },
  { label: "Surfaces", cls: "w-[75px]" },
  { label: "Sheet Metal", cls: "w-[98px]" },
  { label: "Evaluate", cls: "w-[74px]" },
];

function TabRow() {
  return (
    <div className="flex h-[28px] shrink-0 items-center">
      <div className="flex h-full w-[79px] items-center justify-center border-b border-[#808080] bg-[#f7f7f7] pt-px font-bold tracking-[-0.2px]">Features</div>
      <div className="flex h-full w-[310px] border-l border-[#808080]">
        {COMMAND_TABS.map((t) => (
          <div key={t.label} className={`flex h-full items-center justify-center border-r border-b border-[#808080] bg-[#d1d1d1] pt-px text-[#333] ${t.cls}`}>{t.label}</div>
        ))}
      </div>
      <div className="ml-[536px] flex w-[865px] pt-[2px]">
        {HEADS_UP.map((h) => (
          <div key={h.icon} className={`flex items-center ${h.cls}`}>
            <Icon name={h.icon} />
            {h.drop && <Caret className="ml-[8px] text-[#888]" />}
          </div>
        ))}
      </div>
      <div className="flex items-center gap-[12px] pt-[2px] text-[#858585]">
        <Icon name="paneLeft" size={14} />
        <Icon name="paneRight" size={14} />
        <Icon name="minimize" size={13} className="mt-[2px]" />
        <Icon name="restore" size={14} />
        <Icon name="close" size={13} />
      </div>
    </div>
  );
}

const WATERMARK: { ch: string; cls: string }[] = [
  { ch: "w", cls: "scale-x-[0.7]" },
  { ch: "w", cls: "scale-x-[0.7]" },
  { ch: "w", cls: "scale-x-[0.7]" },
  { ch: ".", cls: "-translate-x-[10px]" },
  { ch: "3", cls: "scale-x-[0.82]" },
  { ch: "d", cls: "scale-x-[0.88]" },
  { ch: "m", cls: "scale-x-[0.62]" },
  { ch: "o", cls: "scale-x-[0.86]" },
  { ch: "x", cls: "scale-x-[0.86]" },
  { ch: ".", cls: "-translate-x-[10px]" },
  { ch: "c", cls: "-translate-x-[2px] scale-x-[0.88]" },
  { ch: "o", cls: "scale-x-[0.86]" },
  { ch: "m", cls: "scale-x-[0.62]" },
];

function Watermark() {
  return (
    <div className="absolute top-[343px] left-[291px] flex h-[90px] items-center leading-none text-white [text-shadow:1px_1px_1px_#333]">
      {["莫", "西", "网"].map((c) => (
        <span key={c} className="w-[81px] pb-[8px] text-center font-['Noto_Sans_CJK_SC',sans-serif] text-[78px] font-light">{c}</span>
      ))}
      {WATERMARK.map((w, i) => (
        <span key={i} className="flex w-[40px] justify-center font-['Liberation_Serif',serif] text-[81px]">
          <span className={w.cls}>{w.ch}</span>
        </span>
      ))}
    </div>
  );
}

function Triad() {
  return (
    <svg width="76" height="80" viewBox="0 -8 76 80" className="absolute bottom-[35px] left-[14px]">
      <path d="M36 44V20" stroke="#1b5e20" strokeWidth="5" />
      <path d="M36 12l5 12-5 4-5-4z" fill="#2a8a35" stroke="#14501a" />
      <path d="M36 44L18 53" stroke="#1c1c8c" strokeWidth="4.500" />
      <path d="M9 59l5-9 7 9z" fill="#2a2ad0" stroke="#14146e" />
      <path d="M36 44l18 9" stroke="#a01818" strokeWidth="4.500" />
      <path d="M63 59l-11 0 7-9z" fill="#e02a2a" stroke="#8a1414" />
      <g fontSize="12" fontFamily="Open Sans, sans-serif">
        <text x="32" y="11" fill="#2a7a2a">Y</text>
        <text x="2" y="65" fill="#2222b0">Z</text>
        <text x="62" y="65" fill="#cc2222">X</text>
      </g>
    </svg>
  );
}

function Viewport() {
  return (
    <div className="relative flex flex-1 justify-end border-b border-[#4a4a78] bg-white">
      <div className="absolute top-[392px] -left-px flex h-[39px] w-[9px] items-center justify-center border border-l-0 border-[#808080] bg-[#f7f7f7]">
        <div className="h-[6px] w-[6px] rounded-full border border-[#999] bg-[#ddd]" />
      </div>
      <Watermark />
      <Triad />
      <div className="absolute bottom-[-4px] left-[11px] font-['Lato',sans-serif] text-[17px] leading-[20px] tracking-[0.6px] text-black">*Isometric</div>
      <div className="absolute right-[77px] -bottom-px text-[#a3a3a3]">
        <div className="text-[24px] leading-[30px]">Activate Windows</div>
        <div className="text-[17px] leading-[30px] tracking-[0.2px] whitespace-nowrap">Go to Settings to activate Windows.</div>
      </div>
      <div className="mt-[30px] flex h-[211px] w-[29px] flex-col border-t border-l border-[#808080]">
        {["home", "library", "folder", "palette", "ball", "props", "forum"].map((n) => (
          <div key={n} className={`flex h-[30px] items-center justify-center border-b border-[#808080] pl-[4px] ${n === "ball" ? "bg-[#f7f7f7]" : "bg-[#d1d1d1]"}`}>
            <Icon name={n} />
          </div>
        ))}
      </div>
    </div>
  );
}

function BottomTabs() {
  return (
    <div className="flex h-[21px] shrink-0 border-b border-[#808080] bg-[#f7f7f7]">
      <div className="ml-[2px] flex w-[81px] border-t-2 border-[#2b2b45] bg-[#a5a6b8]">
        {["M4 3v10M12 3v10L6 8z", "M11 3v10L5 8z", "M5 3v10l6-5z", "M12 3v10M4 3v10l6-5z"].map((d) => (
          <div key={d} className="flex w-[20px] items-center justify-center border-r border-b border-[#77788c]">
            <svg width="16" height="16" viewBox="0 0 16 16"><path d={d} fill="#85869c" stroke="#77788f" /></svg>
          </div>
        ))}
      </div>
      <div className="flex w-[75px] items-center justify-center pt-[2px] pl-[4px] text-[15px] font-bold tracking-[0.2px] text-black">Model</div>
      <div className="flex w-[90px] items-center justify-center border-x border-t border-[#808080] bg-[#d1d1d1] pt-[2px] tracking-[0.5px]">3D Views</div>
      <div className="flex w-[144px] items-center border-t border-r border-[#808080] bg-[#d1d1d1] pt-[2px] pl-[13px] tracking-[0.6px]">Motion Study 1</div>
      <div className="mt-px h-[3px] flex-1 bg-white" />
    </div>
  );
}

function StatusBar() {
  return (
    <div className="flex h-[22px] shrink-0 items-center bg-[#f7f7f7]">
      <span className="w-[1609px] pt-[5px] pl-[1px] tracking-[0.17px]">SOLIDWORKS Premium 2016 x64 Edition</span>
      <div className="h-[18px] w-[8px] border-x border-[#d0d0d0]" />
      <div className="flex h-[18px] w-[89px] items-center border-r border-[#d0d0d0] pt-[5px] pl-[5px]">Editing Part</div>
      <div className="flex h-[18px] w-[195px] items-center">
        <div className="ml-[14px] h-full w-px bg-[#d0d0d0]" />
        <span className="ml-[39px] w-[70px] pt-[5px] tracking-[0.1px]">MMGS</span>
        <svg width="5" height="3" viewBox="0 0 5 3"><path d="M0 3h5L2.500 0z" fill="#333" /></svg>
      </div>
      <Icon name="tag" size={16} className="mb-[2px]" />
    </div>
  );
}

const TASKS: { icon: string; cls: string; size?: number }[] = [
  { icon: "windows", cls: "w-[44px]", size: 20 },
  { icon: "cortana", cls: "w-[46px]", size: 20 },
  { icon: "taskview", cls: "w-[44px]", size: 24 },
  { icon: "edge", cls: "w-[54px]" },
  { icon: "explorer", cls: "w-[38px]" },
  { icon: "store", cls: "w-[54px]" },
  { icon: "chrome", cls: "w-[38px]" },
];

function Taskbar() {
  return (
    <div className="flex h-[34px] shrink-0 items-center bg-[#020204] text-white">
      {TASKS.map((t) => (
        <div key={t.icon} className={`flex justify-center pt-[3px] ${t.cls}`}>
          <Icon name={t.icon} size={t.size} />
        </div>
      ))}
      <div className="ml-[5px] flex h-full w-[45px] items-center justify-center bg-[#38383b] pt-[3px]">
        <Icon name="sw" size={22} />
      </div>
      <div className="ml-auto flex items-center pt-[4px]">
        <Icon name="people" className="mr-[18px]" />
        <Icon name="swAlert" size={20} className="mr-[11px]" />
        <Icon name="shield" className="mr-[11px]" />
        <Icon name="cloud" size={20} className="mr-[10px]" />
        <div className="mr-[10px] flex h-[20px] w-[20px] items-center justify-center bg-[#43a047] text-[17px] leading-none font-semibold">Q</div>
        <Icon name="speaker" size={20} className="mr-[12px]" />
        <Icon name="wifi" className="mr-[9px]" />
        <Icon name="battery" size={20} className="mr-[14px]" />
        <span className="w-[45px] pt-px">ENG</span>
        <span className="w-[84px] pt-px whitespace-nowrap">07:40 PM</span>
        <Icon name="notify" size={20} className="mr-[25px]" />
        <div className="h-[30px] w-px bg-[#555]" />
        <div className="w-px" />
      </div>
    </div>
  );
}

export default function App() {
  return (
    <div className="flex h-[1076px] w-[1916px] flex-col overflow-hidden bg-white font-['Open_Sans','Noto_Sans',sans-serif] text-[14px] leading-[18px] text-[#222]">
      <TitleBar />
      <Ribbon />
      <TabRow />
      <div className="flex h-[851px] shrink-0">
        <FeatureTree />
        <div className="flex flex-1 flex-col">
          <Viewport />
          <div className="h-[3px] border-b border-[#4a4a78] bg-[#c5c8e4]" />
        </div>
      </div>
      <BottomTabs />
      <StatusBar />
      <Taskbar />
    </div>
  );
}
